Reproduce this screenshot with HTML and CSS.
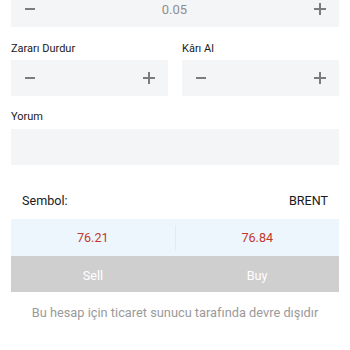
FILE: index.html
```html
<!DOCTYPE html>
<html lang="tr">
<head>
<meta charset="utf-8">
<link rel="stylesheet" href="styles.css">
</head>
<body>
<div class="page">
  <div class="stepper stepper-top">
    <span class="minus"></span>
    <span class="value">0.05</span>
    <span class="plus"></span>
  </div>
  <div class="cols">
    <div class="col">
      <div class="label">Zararı Durdur</div>
      <div class="stepper">
        <span class="minus"></span>
        <span class="plus"></span>
      </div>
    </div>
    <div class="col">
      <div class="label">Kârı Al</div>
      <div class="stepper">
        <span class="minus"></span>
        <span class="plus"></span>
      </div>
    </div>
  </div>
  <div class="label label-comment">Yorum</div>
  <div class="comment"></div>
  <div class="symbol-row">
    <span>Sembol:</span>
    <span>BRENT</span>
  </div>
  <div class="prices">
    <div class="price">76.21</div>
    <div class="divider"></div>
    <div class="price">76.84</div>
  </div>
  <div class="actions">
    <div class="action">Sell</div>
    <div class="action">Buy</div>
  </div>
  <div class="note">Bu hesap için ticaret sunucu tarafında devre dışıdır</div>
</div>
</body>
</html>
```
FILE: styles.css
```css
html, body {
  margin: 0;
  padding: 0;
  background: #ffffff;
}
body {
  font-family: Roboto, "Noto Sans", Arial, sans-serif;
  color: #1a1a1a;
  overflow: hidden;
}
.page {
  padding: 0 11px;
}
.stepper {
  height: 36px;
  background: #f4f5f7;
  display: flex;
  align-items: center;
  justify-content: space-between;
  padding: 0 13px 0 14px;
  box-sizing: border-box;
}
.stepper-top {
  margin-top: -9px;
}
.value {
  font-size: 13px;
  color: #8e8e8e;
}
.minus {
  width: 10px;
  height: 2px;
  background: #7c7c7c;
}
.plus {
  width: 12px;
  height: 12px;
  position: relative;
}
.plus::before, .plus::after {
  content: "";
  position: absolute;
  background: #7c7c7c;
}
.plus::before {
  left: 0;
  right: 0;
  top: 5px;
  height: 2px;
}
.plus::after {
  top: 0;
  bottom: 0;
  left: 5px;
  width: 2px;
}
.cols {
  display: flex;
  gap: 14px;
}
.col {
  flex: 1;
}
.label {
  font-size: 11px;
  line-height: 20px;
  padding-top: 12px;
  margin-bottom: 1px;
  color: #1a1a1a;
}
.label-comment {
  padding-top: 11px;
  margin-bottom: 2px;
}
.comment {
  height: 36px;
  background: #f4f5f7;
}
.symbol-row {
  margin-top: 14px;
  height: 40px;
  display: flex;
  align-items: center;
  justify-content: space-between;
  padding: 2px 11px 0;
  box-sizing: border-box;
  font-size: 12.6px;
  color: #1a1a1a;
}
.prices {
  height: 37px;
  background: #eef6fd;
  display: flex;
  align-items: center;
  box-sizing: border-box;
}
.price {
  flex: 1;
  text-align: center;
  font-size: 12.6px;
  color: #c0392b;
}
.divider {
  width: 1px;
  height: 26px;
  background: #e3ebf2;
}
.actions {
  height: 36px;
  background: #cfcfcf;
  display: flex;
  align-items: center;
  padding-top: 2px;
  box-sizing: border-box;
}
.action {
  flex: 1;
  text-align: center;
  color: #ffffff;
  font-size: 12.6px;
}
.note {
  margin-top: 11px;
  line-height: 20px;
  text-align: center;
  font-size: 12.8px;
  color: #9a9a9a;
}
```
